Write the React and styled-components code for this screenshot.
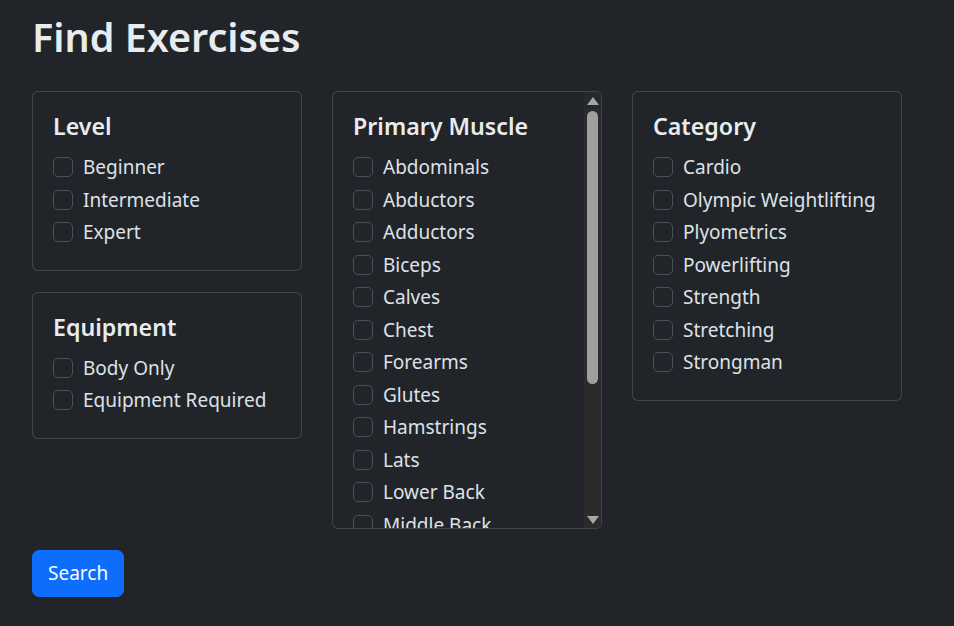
import React from "react";
import styled, { createGlobalStyle } from "styled-components";

const GlobalStyle = createGlobalStyle`
  * { box-sizing: border-box; }
  body {
    margin: 0;
    background: #212529;
    color: #dee2e6;
    font-family: "Noto Sans", "Open Sans", sans-serif;
  }
`;

const Page = styled.div`
  padding: 13px 32px 24px;
`;

const Title = styled.h1`
  margin: 0 0 30px;
  font-size: 39.5px;
  font-weight: 600;
  line-height: 48px;
  color: #e9ecef;
`;

const Grid = styled.div`
  display: grid;
  grid-template-columns: repeat(3, 270px);
  column-gap: 30px;
  align-items: start;
`;

const Column = styled.div`
  display: flex;
  flex-direction: column;
  gap: 21px;
`;

const Card = styled.div`
  display: flex;
  border: 1px solid rgba(255, 255, 255, 0.15);
  border-radius: 6px;
  background: #212529;
  overflow: hidden;
  height: ${({ $height }) => ($height ? `${$height}px` : "auto")};
`;

const CardBody = styled.div`
  flex: 1;
  min-width: 0;
  padding: 20px;
  overflow: hidden;
`;

/* fake dark scrollbar, drawn because headless chrome hides the native one */
const ScrollBar = styled.div`
  flex: none;
  width: 17px;
  display: flex;
  flex-direction: column;
  align-items: center;
  background: #2b2b2b;
`;

const ArrowSlot = styled.div`
  flex: none;
  height: 17px;
  width: 100%;
  display: flex;
  align-items: center;
  justify-content: center;
  background: ${({ $top }) => ($top ? "#25282c" : "#2b2b2b")};
`;

const Arrow = styled.span`
  width: 0;
  height: 0;
  border-left: 6px solid transparent;
  border-right: 6px solid transparent;
  ${({ $down }) =>
    $down ? "border-top: 8px solid #a6a6a6;" : "border-bottom: 8px solid #a6a6a6;"}
`;

const Thumb = styled.div`
  flex: none;
  width: 11px;
  margin-top: 2px;
  border-radius: 6px;
  background: #9f9f9f;
`;

const Spacer = styled.div`
  flex: 1;
`;

const CardTitle = styled.h4`
  margin: 0 0 12px;
  font-size: 23.2px;
  font-weight: 600;
  line-height: 28px;
  color: #e9ecef;
`;

const Check = styled.label`
  display: flex;
  align-items: flex-start;
  gap: 10px;
  min-height: 30px;
  margin-bottom: 2.5px;
  font-size: 19px;
  line-height: 30px;
  white-space: nowrap;
  cursor: pointer;
`;

const Box = styled.input.attrs({ type: "checkbox" })`
  appearance: none;
  flex: none;
  width: 20px;
  height: 20px;
  margin: 5px 0 0;
  border: 1px solid #495057;
  border-radius: 5px;
  background: #212529;
`;

const SearchButton = styled.button`
  margin-top: 21px;
  padding: 8px 15px;
  border: 1px solid #0d6efd;
  border-radius: 7px;
  background: #0d6efd;
  color: #fff;
  font-family: inherit;
  font-size: 19px;
  line-height: 29px;
  cursor: pointer;
`;

const levels = ["Beginner", "Intermediate", "Expert"];
const equipment = ["Body Only", "Equipment Required"];
const muscles = [
  "Abdominals", "Abductors", "Adductors", "Biceps", "Calves", "Chest",
  "Forearms", "Glutes", "Hamstrings", "Lats", "Lower Back", "Middle Back",
  "Neck", "Quadriceps", "Shoulders", "Traps", "Triceps",
];
const categories = [
  "Cardio", "Olympic Weightlifting", "Plyometrics", "Powerlifting",
  "Strength", "Stretching", "Strongman",
];

const FilterCard = ({ title, items, height, thumb }) => (
  <Card $height={height}>
    <CardBody>
      <CardTitle>{title}</CardTitle>
      {items.map((item) => (
        <Check key={item}>
          <Box />
          {item}
        </Check>
      ))}
    </CardBody>
    {thumb && (
      <ScrollBar>
        <ArrowSlot $top>
          <Arrow />
        </ArrowSlot>
        <Thumb style={{ height: thumb }} />
        <Spacer />
        <ArrowSlot>
          <Arrow $down />
        </ArrowSlot>
      </ScrollBar>
    )}
  </Card>
);

export default function App() {
  return (
    <Page>
      <GlobalStyle />
      <Title>Find Exercises</Title>
      <Grid>
        <Column>
          <FilterCard title="Level" items={levels} />
          <FilterCard title="Equipment" items={equipment} />
        </Column>
        <FilterCard title="Primary Muscle" items={muscles} height={438} thumb={273} />
        <FilterCard title="Category" items={categories} />
      </Grid>
      <SearchButton>Search</SearchButton>
    </Page>
  );
}
